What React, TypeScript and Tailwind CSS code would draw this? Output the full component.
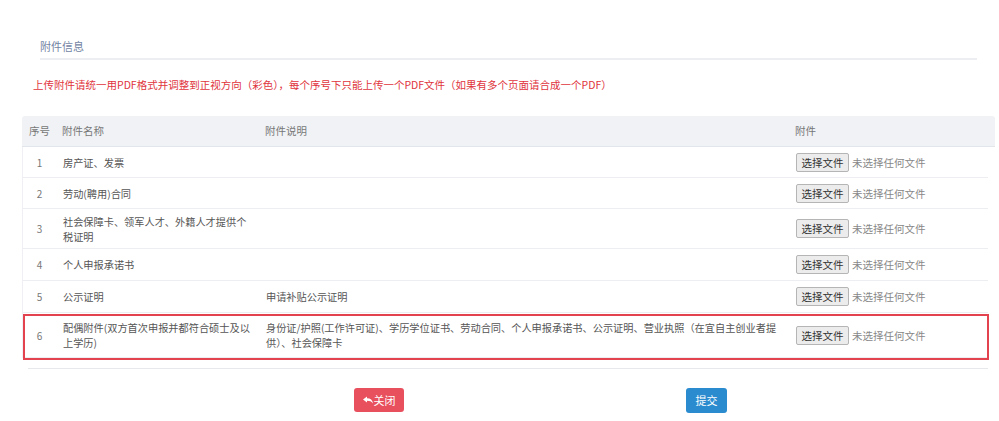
import React from 'react';

const font = { fontFamily: '"Noto Sans CJK SC", "Noto Sans", sans-serif' };

interface Row {
  no: number;
  name: string;
  desc?: string;
  h: string;
}

const rows: Row[] = [
  { no: 1, name: '房产证、发票', h: 'h-[31px]' },
  { no: 2, name: '劳动(聘用)合同', h: 'h-[31px]' },
  { no: 3, name: '社会保障卡、领军人才、外籍人才提供个税证明', h: 'h-[40px]' },
  { no: 4, name: '个人申报承诺书', h: 'h-[32px]' },
  { no: 5, name: '公示证明', desc: '申请补贴公示证明', h: 'h-[32px]' },
  {
    no: 6,
    name: '配偶附件(双方首次申报并都符合硕士及以上学历)',
    desc: '身份证/护照(工作许可证)、学历学位证书、劳动合同、个人申报承诺书、公示证明、营业执照（在宜自主创业者提供）、社会保障卡',
    h: 'h-[45px]',
  },
];

const FilePicker: React.FC = () => (
  <div className="flex items-center gap-[3px]">
    <span className="h-[19px] w-[53px] flex items-center justify-center border border-[#b5b5b5] bg-[#ececec] text-[10.5px] text-[#333] rounded-[2px]">
      选择文件
    </span>
    <span className="text-[10.5px] text-[#888]">未选择任何文件</span>
  </div>
);

const App: React.FC = () => (
  <div className="w-[999px] h-[421px] bg-white overflow-hidden" style={font}>
    <div className="pt-[38px] pl-[40px] pr-[22px]">
      <div className="text-[11px] leading-[16px] text-[#7284a3] pb-[4px] border-b-2 border-[#eceef1]">
        附件信息
      </div>
    </div>
    <div className="pl-[33px] pt-[18px] text-[10.5px] leading-[14px] text-[#e0343c]">
      上传附件请统一用PDF格式并调整到正视方向（彩色），每个序号下只能上传一个PDF文件（如果有多个页面请合成一个PDF）
    </div>

    <div className="ml-[22px] mr-[4px] mt-[24px]">
      <div className="flex items-center h-[31px] bg-[#f0f2f5] rounded-t-[3px] border-b border-[#e2e5ea] text-[10.5px] text-[#777]">
        <div className="w-[33px] pl-[7px]">序号</div>
        <div className="w-[203px] pl-[7px]">附件名称</div>
        <div className="w-[530px] pl-[7px]">附件说明</div>
        <div className="flex-1 pl-[7px]">附件</div>
      </div>
      <div className="relative mr-[7px] border-l border-[#eef0f3]">
        {rows.map((r) => (
          <div key={r.no} className={`flex items-center ${r.h} border-b border-[#eceef1] text-[10.2px] leading-[15px] text-[#555]`}>
            <div className="w-[33px] text-center text-[10px] text-[#777]">{r.no}</div>
            <div className="w-[203px] pl-[7px] pr-[4px]">{r.name}</div>
            <div className="w-[530px] pl-[7px] pr-[6px]">{r.desc}</div>
            <div className="flex-1 pl-[7px]">
              <FilePicker />
            </div>
          </div>
        ))}
        <div className="absolute left-0 right-[-1px] bottom-[-2px] h-[46px] border-2 border-[#e3434e] pointer-events-none" />
      </div>
      <div className="mt-[10px] ml-[6px] mr-[7px] border-t border-[#e6e8eb]" />
    </div>

    <div className="flex mt-[19px]">
      <div className="ml-[354px] w-[50px] h-[24px] rounded-[3px] bg-[#e8505d] text-white text-[11px] flex items-center justify-center gap-[1px]">
        <svg width="10" height="8" viewBox="0 0 10 8" fill="white">
          <path d="M0 3.5 L4 0.5 V2.3 C7.5 2.3 9.5 4 10 7.5 C8.5 5.5 7 4.8 4 4.8 V6.6 Z" />
        </svg>
        <span>关闭</span>
      </div>
      <div className="ml-[282px] w-[41px] h-[25px] rounded-[3px] bg-[#2a8bcf] text-white text-[11px] flex items-center justify-center">
        提交
      </div>
    </div>
  </div>
);

export default App;
